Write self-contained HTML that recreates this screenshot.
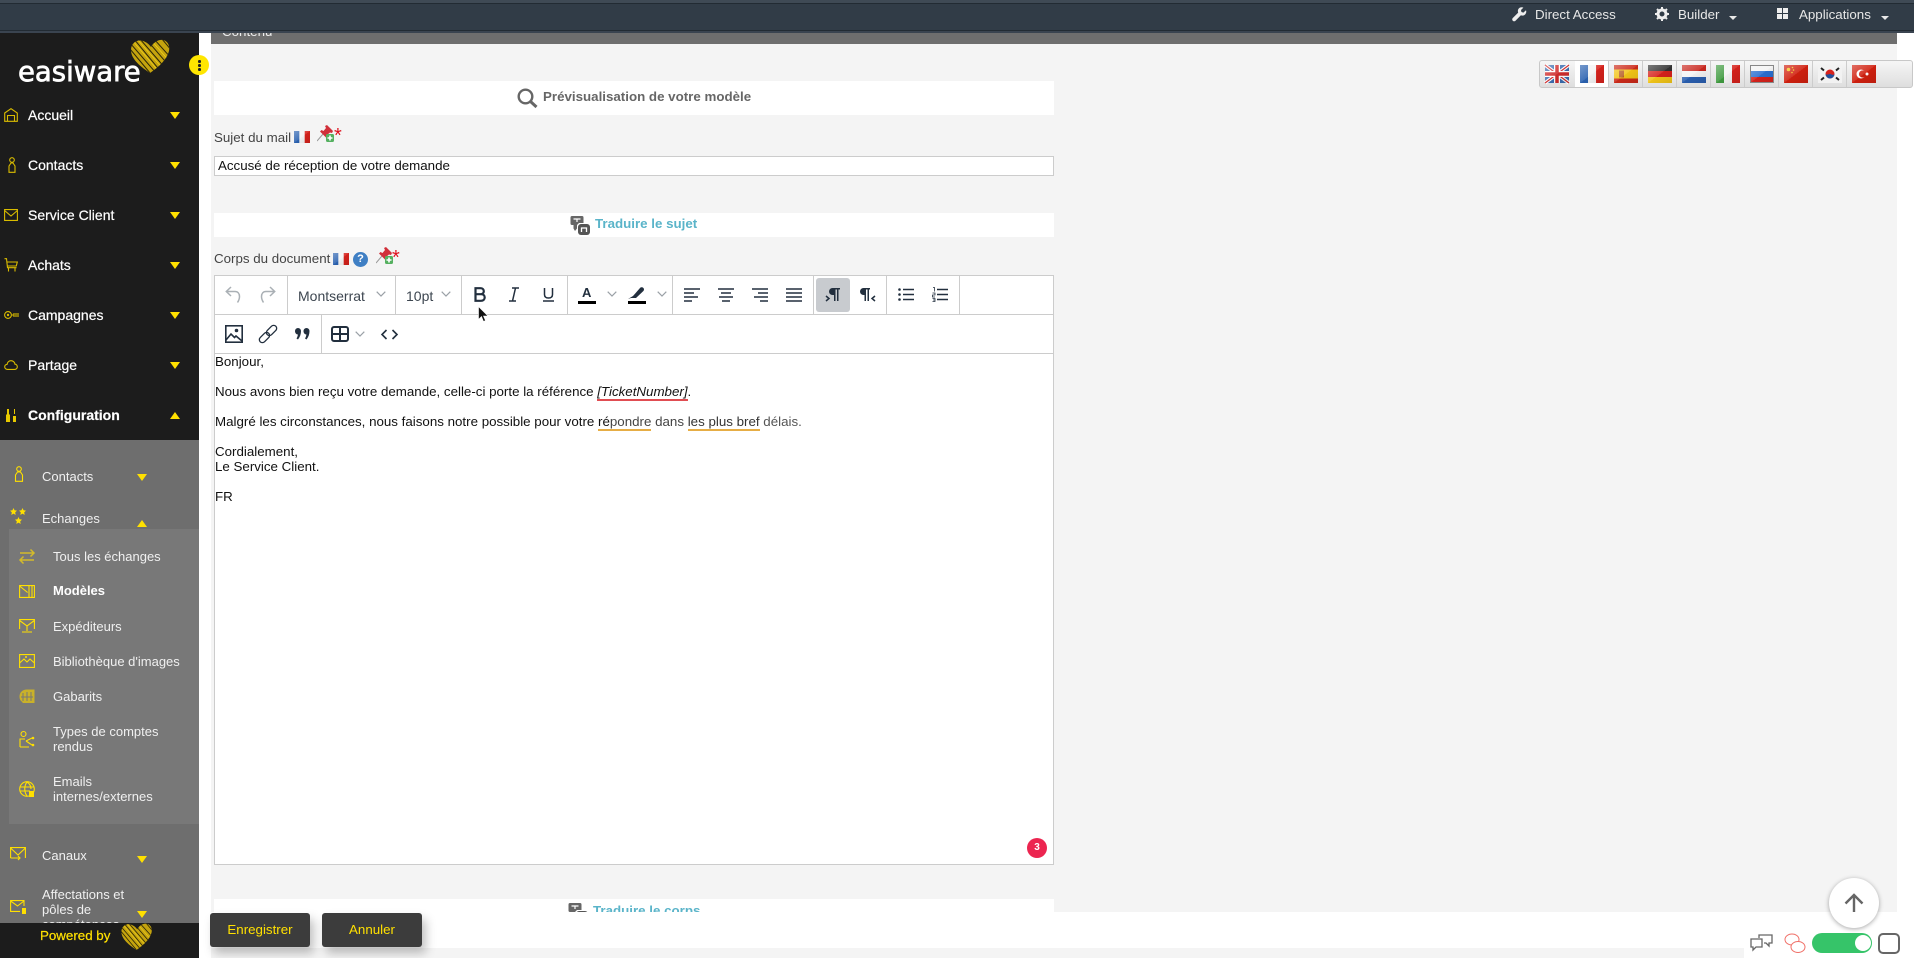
<!DOCTYPE html>
<html lang="fr"><head><meta charset="utf-8"><title>Easiware</title>
<style>
*{box-sizing:border-box}
html,body{margin:0;padding:0;width:1914px;height:958px;overflow:hidden;background:#fff;font-family:"Liberation Sans",sans-serif}
.a{position:absolute}
.t{position:absolute;white-space:nowrap;line-height:20px;font-size:13.33px}
.nav{color:#fff;font-size:14px;left:28px;-webkit-text-stroke:.2px #fff}
.sub{color:#f0f0f0;font-size:13px;left:42px}
.sub2{color:#f0f0f0;font-size:13px;left:53px}
.lab{color:#444;font-size:13.33px;left:214px}
.body{color:#111;font-size:13.33px;left:215px;line-height:15px;height:15px}
.dn{position:absolute;width:0;height:0;border-left:5px solid transparent;border-right:5px solid transparent;border-top:7px solid #ffe000}
.up{position:absolute;width:0;height:0;border-left:5px solid transparent;border-right:5px solid transparent;border-bottom:7px solid #ffe000}
.vl{position:absolute;width:1px;background:#ccc}
svg{position:absolute;overflow:visible}
.ic{fill:none;stroke:#d9bc00;stroke-width:1.1}
.tb{fill:none;stroke:#222f3e;stroke-width:1.6}
.g{fill:none;stroke:#aab0b5;stroke-width:1.5}
.fl{position:absolute;top:65px;width:24px;height:18px}
.car{position:absolute;width:0;height:0;border-left:4px solid transparent;border-right:4px solid transparent;border-top:4px solid #e8e8e8}
.btn{position:absolute;top:913px;width:100px;height:34px;background:#3c3c3c;border-radius:3px;color:#ffe000;font-size:13.33px;line-height:33px;text-align:center;box-shadow:4px 6px 10px rgba(0,0,0,.25)}
</style></head><body>
<svg width="0" height="0" style="position:absolute"><defs>
<linearGradient id="sh" x1="0" y1="0" x2="1" y2="1"><stop offset="0" stop-color="#fff" stop-opacity=".35"/><stop offset=".5" stop-color="#fff" stop-opacity=".1"/><stop offset=".5" stop-color="#000" stop-opacity=".02"/><stop offset="1" stop-color="#000" stop-opacity=".1"/></linearGradient>
<clipPath id="hc"><path d="M20 34C8 26 1 19 1 11 1 4 7 0 13 2c3 1 6 3 8 6 2-4 7-8 12-7 5 1 7 6 6 11-2 8-9 15-19 22z"/></clipPath>
<symbol id="heart" viewBox="0 0 40 34"><g clip-path="url(#hc)"><rect width="40" height="34" fill="#c4a30e"/><g stroke="#2a2508" stroke-width="1"><path d="M0 4 26 34M0 10 20 34M4 0 32 34M10 0 36 30M16 0 40 28M24 0 42 20M32 0 42 12"/></g><g stroke="#f0d020" stroke-width=".7"><path d="M2 1 30 34M7 0 35 32M20 0 41 24"/></g></g></symbol>
<symbol id="ffr" viewBox="0 0 16 12"><rect width="5.4" height="12" fill="#2b62b0"/><rect x="5.4" width="5.3" height="12" fill="#f4f4f4"/><rect x="10.7" width="5.3" height="12" fill="#d6221c"/><rect width="16" height="12" fill="url(#sh)"/></symbol>
<symbol id="pin" viewBox="0 0 17 17"><path d="M0 16 6 9" stroke="#999" stroke-width="1"/><path d="M8 1 10 0 16 6 15 8 13 7.500 10 10 11 12 9.500 13 3 6.500 4.500 5 6.500 6 9 3z" fill="#d1303a"/><rect x="9" y="9" width="8" height="8" rx="1.500" fill="#55b060"/><path d="M13 10.500v5M10.500 13h5" stroke="#fff" stroke-width="1.600"/></symbol>
<symbol id="chev" viewBox="0 0 10 6"><path d="M.7.7 5 5 9.3.7" fill="none" stroke="#9aa0a6" stroke-width="1.2"/></symbol>
<symbol id="trad" viewBox="0 0 20 20"><path d="M2 1h10a1.500 1.500 0 0 1 1.500 1.500V8H9l-2 2v3.500L5 16l-1.500-2.500V10H2A1.500 1.500 0 0 1 .5 8.500v-6A1.500 1.500 0 0 1 2 1z" fill="#666"/><path d="M3.500 4h7M7 4v3" stroke="#fff" stroke-width="1.200"/><rect x="8" y="9" width="12" height="11" rx="3" fill="#555"/><path d="M11.500 17v-4h5v4" fill="none" stroke="#fff" stroke-width="1.300"/></symbol>
<symbol id="star" viewBox="0 0 10 10"><path d="M5 0l1.500 3.300L10 3.800 7.400 6.200 8.100 10 5 8.100 1.900 10l.7-3.800L0 3.800l3.500-.5z" fill="#ffe000"/></symbol>
</defs></svg>

<!-- main background -->
<div class="a" style="left:199px;top:33px;width:1715px;height:925px;background:#fff"></div>
<div class="a" style="left:211px;top:33px;width:1686px;height:925px;background:#f4f4f4"></div>
<div class="a" style="left:211px;top:33px;width:1686px;height:11px;background:#6e6e6e;overflow:hidden"><div class="t" style="left:11px;top:-11px;color:#eee">Contenu</div></div>

<!-- header -->
<div class="a" style="left:0;top:0;width:1914px;height:33px;background:#313c47;border-top:3px solid #3f4a55;box-shadow:inset 0 1px 0 #222b33,inset 0 -2px 0 #3a4450,inset 0 -3px 0 #222b33"></div>
<svg style="left:1512px;top:7px" width="15" height="15" viewBox="0 0 15 15"><path d="M14 3.2 11.4 5.6 9.4 5 9 3 11.4.6C9.4-.2 7 .6 6.2 2.4c-.5 1-.4 2.3 0 3.2L.8 11c-.8.8-.8 1.900 0 2.700s1.900.8 2.700 0l5.400-5.400c1.200.5 2.600.4 3.600-.3 1.500-1 2.200-3 1.500-4.800z" fill="#eee"/></svg>
<div class="t" style="left:1535px;top:5px;color:#e8e8e8">Direct Access</div>
<svg style="left:1655px;top:7px" width="14" height="14" viewBox="0 0 14 14"><circle cx="7" cy="7" r="4" fill="none" stroke="#eee" stroke-width="3"/><path d="M7 0v3M7 11v3M0 7h3M11 7h3M2 2l2 2M10 10l2 2M2 12l2-2M10 4l2-2" stroke="#eee" stroke-width="2"/></svg>
<div class="t" style="left:1678px;top:5px;color:#e8e8e8">Builder</div><div class="car" style="left:1729px;top:16px"></div>
<div class="a" style="left:1777px;top:8px;width:5px;height:5px;background:#eee"></div><div class="a" style="left:1783px;top:8px;width:5px;height:5px;background:#eee"></div><div class="a" style="left:1777px;top:14px;width:5px;height:5px;background:#eee"></div><div class="a" style="left:1783px;top:14px;width:5px;height:5px;background:#eee"></div>
<div class="t" style="left:1799px;top:5px;color:#e8e8e8">Applications</div><div class="car" style="left:1881px;top:16px"></div>

<!-- sidebar -->
<div class="a" style="left:0;top:33px;width:199px;height:925px;background:#1c1c1c"></div>
<div class="t" style="left:18px;top:54px;line-height:36px;font-size:27.5px;font-family:'DejaVu Sans',sans-serif;color:#fff;-webkit-text-stroke:.7px #fff">easiware</div>
<svg style="left:130px;top:39px" width="40" height="34"><use href="#heart" width="40" height="34"/></svg>
<div class="a" style="left:189px;top:55px;width:20px;height:20px;border-radius:50%;background:#ffe600"></div>
<div class="a" style="left:198px;top:60px;width:2.500px;height:2.500px;background:#222;border-radius:50%;box-shadow:0 4px 0 #222,0 8px 0 #222"></div>

<svg style="left:4px;top:108px" width="14" height="14" viewBox="0 0 14 14"><path class="ic" d="M.7 5 7 .7 13.300 5v8.300H.7zM3.500 13.300V7.500h7v5.800"/></svg>
<div class="t nav" style="top:105px">Accueil</div><div class="dn" style="left:170px;top:112px"></div>
<svg style="left:7px;top:157px" width="10" height="16" viewBox="0 0 10 16"><circle class="ic" cx="5" cy="3" r="2.300"/><path class="ic" d="M2 15.300V9l2-3h2l2 3v6.300z"/></svg>
<div class="t nav" style="top:155px">Contacts</div><div class="dn" style="left:170px;top:162px"></div>
<svg style="left:4px;top:209px" width="14" height="12" viewBox="0 0 14 12"><path class="ic" d="M.6.6h12.800v10.800H.6zM.6 1.500 7 7l6.400-5.500"/></svg>
<div class="t nav" style="top:205px">Service Client</div><div class="dn" style="left:170px;top:212px"></div>
<svg style="left:4px;top:258px" width="14" height="14" viewBox="0 0 14 14"><path class="ic" d="M.5.7h2l1 9h9M3.300 4h10l-1 4H3.700M4.500 10v3.500M11 10v3.500"/></svg>
<div class="t nav" style="top:255px">Achats</div><div class="dn" style="left:170px;top:262px"></div>
<svg style="left:4px;top:310px" width="14" height="10" viewBox="0 0 14 10"><circle class="ic" cx="4" cy="5" r="3.400"/><circle cx="4" cy="5" r="1.200" fill="#d9bc00"/><path class="ic" d="M8 5h2M10 3v4M12 3v4M14 3v4"/></svg>
<div class="t nav" style="top:305px">Campagnes</div><div class="dn" style="left:170px;top:312px"></div>
<svg style="left:4px;top:360px" width="14" height="10" viewBox="0 0 14 10"><path class="ic" d="M3.500 9.400C1.800 9.400.7 8.200.7 6.800s1.100-2.400 2.300-2.400C3.300 2.200 5 .7 7 .7s3.800 1.500 4 3.500c1.300.1 2.300 1.200 2.300 2.600s-1 2.600-2.600 2.600z"/></svg>
<div class="t nav" style="top:355px">Partage</div><div class="dn" style="left:170px;top:362px"></div>
<svg style="left:5px;top:408px" width="12" height="14" viewBox="0 0 12 14"><path d="M1 14V7l1-1V1h2v5l1 1v7zM8 14V8h3v6zM9 6V1h1v5z" fill="#e6c800"/></svg>
<div class="t nav" style="top:405px;font-weight:bold">Configuration</div><div class="up" style="left:170px;top:412px"></div>

<div class="a" style="left:0;top:440px;width:199px;height:483px;background:#6e6e6e"></div>
<svg style="left:14px;top:466px" width="10" height="16" viewBox="0 0 10 16"><circle class="ic" style="stroke:#ffe000" cx="5" cy="3" r="2.300"/><path class="ic" style="stroke:#ffe000" d="M1.500 15.300V9l2-3h3l2 3v6.300z"/></svg>
<div class="t sub" style="top:467px">Contacts</div><div class="dn" style="left:137px;top:474px"></div>
<svg style="left:10px;top:508px" width="7" height="7"><use href="#star" width="7" height="7"/></svg>
<svg style="left:19px;top:508px" width="7" height="7"><use href="#star" width="7" height="7"/></svg>
<svg style="left:15px;top:517px" width="7" height="7"><use href="#star" width="7" height="7"/></svg>
<div class="t sub" style="top:509px">Echanges</div><div class="up" style="left:137px;top:520px"></div>

<div class="a" style="left:9px;top:529px;width:190px;height:295px;background:#787878"></div>
<svg style="left:19px;top:549px" width="16" height="15" viewBox="0 0 16 15"><path class="ic" style="stroke:#d4bb2a;stroke-width:1.500" d="M1 4h14M11.500 .5 15 4l-3.500 3.500M15 11H1M4.500 7.500 1 11l3.500 3.500"/></svg>
<div class="t sub2" style="top:547px">Tous les échanges</div>
<svg style="left:19px;top:585px" width="16" height="13" viewBox="0 0 16 13"><path class="ic" style="stroke:#ffe000" d="M.6.600h14.800v11.800H.6zM.6 1l8 6.500M10 1v11M13 1v11"/></svg>
<div class="t sub2" style="top:581px;font-weight:bold;color:#fff">Modèles</div>
<svg style="left:19px;top:619px" width="16" height="14" viewBox="0 0 16 14"><path class="ic" style="stroke:#ffe000" d="M.6 10V.6h14.800V10M.6 1.500 8 7l7.400-5.500M8 7v5M3 13h10"/></svg>
<div class="t sub2" style="top:617px">Expéditeurs</div>
<svg style="left:19px;top:654px" width="16" height="14" viewBox="0 0 16 14"><path class="ic" style="stroke:#ffe000" d="M.6.600h14.800v12.800H.6zM.6 9 5 5l3 3 3-3 4.400 4"/><circle cx="7" cy="3" r="1" fill="#ffe000"/></svg>
<div class="t sub2" style="top:652px">Bibliothèque d'images</div>
<svg style="left:19px;top:689px" width="16" height="15" viewBox="0 0 16 15"><path d="M8 .5C3.500.5.500 3.500.5 7.500c0 2.500 1 4.500 3 5.500V14h12V.5z" fill="#c9b12a"/><path d="M4 4v8M8 3v9M12 3v9M2 8h12" stroke="#787878" stroke-width="1"/></svg>
<div class="t sub2" style="top:687px">Gabarits</div>
<svg style="left:19px;top:731px" width="16" height="17" viewBox="0 0 16 17"><circle class="ic" style="stroke:#ffe000" cx="4.500" cy="3" r="2.500"/><path class="ic" style="stroke:#ffe000" d="M1 16V8h5M1 16h9M7 10l6-3M7 10l6 4"/><circle cx="14" cy="7" r="1.300" fill="#ffe000"/><circle cx="14" cy="14" r="1.300" fill="#ffe000"/></svg>
<div class="t sub2" style="top:722px">Types de comptes</div><div class="t sub2" style="top:737px">rendus</div>
<svg style="left:19px;top:781px" width="16" height="16" viewBox="0 0 16 16"><circle class="ic" style="stroke:#ffe000" cx="8" cy="8" r="7.300"/><path class="ic" style="stroke:#ffe000" d="M1 6h14M1 10h10M8 1C5 5 5 11 8 15M8 1c3 2 4 5 4 7"/><rect x="10" y="10" width="5" height="6" fill="#ffe000"/></svg>
<div class="t sub2" style="top:772px">Emails</div><div class="t sub2" style="top:787px">internes/externes</div>

<svg style="left:10px;top:847px" width="16" height="14" viewBox="0 0 16 14"><path class="ic" style="stroke:#ffe000" d="M.6 11V.6h14.800V11M.6 1 8 8l7.400-7M.6 11h9M8 9l2 2-2 2"/></svg>
<div class="t sub" style="top:846px">Canaux</div><div class="dn" style="left:137px;top:856px"></div>
<div class="a" style="left:0;top:880px;width:199px;height:43px;overflow:hidden">
<div class="t sub" style="top:5px">Affectations et</div><div class="t sub" style="top:20px">pôles de</div><div class="t sub" style="top:35px">compétences</div></div>
<svg style="left:10px;top:900px" width="16" height="14" viewBox="0 0 16 14"><path class="ic" style="stroke:#ffe000" d="M14 6V.6H.6v10.800H10M.6 1 7.500 6 14 1"/><rect x="12" y="8" width="4" height="6" fill="#ffe000"/></svg>
<div class="dn" style="left:137px;top:911px"></div>

<div class="a" style="left:0;top:923px;width:199px;height:35px;background:#1c1c1c"></div>
<div class="t" style="left:40px;top:926px;font-size:13.33px;color:#ffe000;-webkit-text-stroke:.2px #ffe000">Powered by</div>
<svg style="left:120px;top:923px" width="33" height="27" viewBox="0 0 40 34"><use href="#heart" width="40" height="34"/></svg>

<!-- preview -->
<div class="a" style="left:214px;top:81px;width:840px;height:34px;background:#fff"></div>
<svg style="left:517px;top:88px" width="21" height="20" viewBox="0 0 21 20"><circle cx="8.500" cy="8.500" r="6.800" fill="none" stroke="#666" stroke-width="2.400"/><path d="M13.500 13.500 19.500 19" stroke="#666" stroke-width="3"/></svg>
<div class="t" style="left:543px;top:87px;font-weight:bold;color:#666">Prévisualisation de votre modèle</div>

<div class="t lab" style="top:128px">Sujet du mail</div>
<svg style="left:294px;top:131px" width="16" height="12"><use href="#ffr" width="16" height="12"/></svg>
<svg style="left:317px;top:125px" width="17" height="17"><use href="#pin" width="17" height="17"/></svg>
<div class="t" style="left:334px;top:126px;color:#e0101c;font-size:20px">*</div>

<div class="a" style="left:214px;top:156px;width:840px;height:20px;background:#fff;border:1px solid #ccc"></div>
<div class="t" style="left:218px;top:156px;color:#111">Accusé de réception de votre demande</div>

<div class="a" style="left:214px;top:213px;width:840px;height:24px;background:#fff"></div>
<svg style="left:570px;top:215px" width="20" height="20"><use href="#trad" width="20" height="20"/></svg>
<div class="t" style="left:595px;top:214px;font-weight:bold;color:#5ab4c9">Traduire le sujet</div>

<div class="t lab" style="top:249px">Corps du document</div>
<svg style="left:333px;top:253px" width="16" height="12"><use href="#ffr" width="16" height="12"/></svg>
<div class="a" style="left:353px;top:252px;width:15px;height:15px;border-radius:50%;background:#3f7fc4;color:#fff;font-size:11px;font-weight:bold;line-height:15px;text-align:center">?</div>
<svg style="left:376px;top:247px" width="17" height="17"><use href="#pin" width="17" height="17"/></svg>
<div class="t" style="left:392px;top:248px;color:#e0101c;font-size:20px">*</div>

<!-- editor -->
<div class="a" style="left:214px;top:275px;width:840px;height:590px;background:#fff;border:1px solid #ccc"></div>
<div class="a" style="left:215px;top:314px;width:838px;height:1px;background:#ccc"></div>
<div class="a" style="left:215px;top:353px;width:838px;height:1px;background:#ccc"></div>
<div class="vl" style="left:287px;top:276px;height:38px"></div>
<div class="vl" style="left:395px;top:276px;height:38px"></div>
<div class="vl" style="left:461px;top:276px;height:38px"></div>
<div class="vl" style="left:567px;top:276px;height:38px"></div>
<div class="vl" style="left:672px;top:276px;height:38px"></div>
<div class="vl" style="left:813px;top:276px;height:38px"></div>
<div class="vl" style="left:886px;top:276px;height:38px"></div>
<div class="vl" style="left:959px;top:276px;height:38px"></div>
<div class="vl" style="left:321px;top:315px;height:38px"></div>

<svg style="left:225px;top:286px" width="16" height="18" viewBox="0 0 16 18"><path class="g" d="M6 1 1.300 5.500 6 10M1.500 5.500H10c3 0 4.500 2.200 4.500 5s-1 4.500-2 6"/></svg>
<svg style="left:260px;top:286px" width="16" height="18" viewBox="0 0 16 18"><path class="g" d="M10 1l4.700 4.500L10 10M14.500 5.500H6c-3 0-4.500 2.200-4.500 5s1 4.500 2 6"/></svg>
<div class="t" style="left:298px;top:286px;font-size:14px;color:#3d4650">Montserrat</div>
<svg style="left:376px;top:291px" width="10" height="6"><use href="#chev" width="10" height="6"/></svg>
<div class="t" style="left:406px;top:286px;font-size:14px;color:#3d4650">10pt</div>
<svg style="left:441px;top:291px" width="10" height="6"><use href="#chev" width="10" height="6"/></svg>
<svg style="left:474px;top:287px" width="12" height="15" viewBox="0 0 12 15"><path d="M1.500 1.200h5c2 0 3.300 1.200 3.300 3S8.500 7.200 6.500 7.200h-5zM1.500 7.200h5.500c2.300 0 3.700 1.300 3.700 3.200s-1.400 3.400-3.700 3.400H1.500z" fill="none" stroke="#222f3e" stroke-width="2.200"/></svg>
<svg style="left:509px;top:287px" width="10" height="15" viewBox="0 0 10 15"><path d="M3 1h7M0 14h7M6.500 1l-3 13" fill="none" stroke="#222f3e" stroke-width="1.500"/></svg>
<svg style="left:543px;top:287px" width="11" height="15" viewBox="0 0 11 15"><path d="M1.500 1v6.500c0 2.400 1.700 3.500 4 3.500s4-1.100 4-3.500V1M0 14h11" fill="none" stroke="#222f3e" stroke-width="1.500"/></svg>
<div class="t" style="left:582px;top:283px;font-size:13px;font-weight:bold;color:#222f3e">A</div>
<div class="a" style="left:578px;top:301px;width:18px;height:3px;background:#000"></div>
<svg style="left:607px;top:291px" width="10" height="6"><use href="#chev" width="10" height="6"/></svg>
<svg style="left:628px;top:287px" width="17" height="13" viewBox="0 0 17 13"><path d="M0 12 5 9 12 1c1.500-1.500 4-.5 4 1.500 0 .5-.2 1-.6 1.500L8 11H3z" fill="#222f3e"/></svg>
<div class="a" style="left:628px;top:301px;width:18px;height:3px;background:#000"></div>
<svg style="left:657px;top:291px" width="10" height="6"><use href="#chev" width="10" height="6"/></svg>
<!-- align -->
<svg style="left:684px;top:287px" width="16" height="15"><path class="tb" d="M0 2h16M0 6h10M0 10h14M0 14h8"/></svg>
<svg style="left:718px;top:287px" width="16" height="15"><path class="tb" d="M0 2h16M3 6h10M1 10h14M4 14h8"/></svg>
<svg style="left:752px;top:287px" width="16" height="15"><path class="tb" d="M0 2h16M6 6h10M2 10h14M8 14h8"/></svg>
<svg style="left:786px;top:287px" width="16" height="15"><path class="tb" d="M0 2h16M0 6h16M0 10h16M0 14h16"/></svg>
<div class="a" style="left:816px;top:278px;width:34px;height:34px;background:#c8cbcf;border-radius:3px"></div>
<svg style="left:825px;top:287px" width="16" height="15" viewBox="0 0 16 15"><path d="M10 1H7.500a3.500 3.500 0 0 0 0 7H9v6h1.500V2.500H12V14h1.500V2.500H15V1z" fill="#222f3e"/><path d="M1 9l3 2.500L1 14" fill="none" stroke="#222f3e" stroke-width="1.500"/></svg>
<svg style="left:859px;top:287px" width="17" height="15" viewBox="0 0 17 15"><path d="M8 1H4.500a3.500 3.500 0 0 0 0 7H5.500v6H7V2.500h1.500V14H10V2.500h1V1z" fill="#222f3e"/><path d="M16 9l-3 2.500L16 14" fill="none" stroke="#222f3e" stroke-width="1.500"/></svg>
<svg style="left:898px;top:287px" width="16" height="15"><path class="tb" d="M5 2.500h11M5 7.500h11M5 12.500h11"/><circle cx="1.500" cy="2.500" r="1.300" fill="#222f3e"/><circle cx="1.500" cy="7.500" r="1.300" fill="#222f3e"/><circle cx="1.500" cy="12.500" r="1.300" fill="#222f3e"/></svg>
<svg style="left:932px;top:287px" width="16" height="15"><path class="tb" d="M5 2.500h11M5 7.500h11M5 12.500h11"/><path d="M1 .5h1.500v4M.5 6h2.500v2H.5v2H3M.5 11.500H3v3H.5M1 13h2" fill="none" stroke="#222f3e" stroke-width=".8"/></svg>

<svg style="left:225px;top:325px" width="18" height="18" viewBox="0 0 18 18"><rect x=".8" y=".8" width="16.400" height="16.400" fill="none" stroke="#222f3e" stroke-width="1.600"/><circle cx="11.500" cy="5.500" r="1.800" fill="#222f3e"/><path d="M1 15 6 9l3.500 3.500L11 11l6 5" fill="none" stroke="#222f3e" stroke-width="1.600"/></svg>
<svg style="left:259px;top:325px" width="18" height="18" viewBox="0 0 18 18"><g transform="rotate(-45 9 9)" fill="none" stroke="#222f3e" stroke-width="1.300"><rect x="-2" y="6" width="12" height="6" rx="3"/><rect x="8" y="6" width="12" height="6" rx="3"/></g></svg>
<svg style="left:295px;top:328px" width="15" height="12" viewBox="0 0 15 12"><path d="M0 3a3 3 0 0 1 6 0c0 3-1 6-3 8.500L1.500 10.500C2.200 9.500 2.700 8 2.900 6.500 1.200 6.400 0 5 0 3zM8.500 3a3 3 0 0 1 6 0c0 3-1 6-3 8.500L10 10.500c.7-1 1.200-2.500 1.400-4C9.700 6.400 8.500 5 8.500 3z" fill="#222f3e"/></svg>
<svg style="left:331px;top:326px" width="18" height="16" viewBox="0 0 18 16"><rect x="1" y="1" width="16" height="14" rx="2" fill="none" stroke="#222f3e" stroke-width="2"/><path d="M1 8h16M9 1v14" stroke="#222f3e" stroke-width="2"/></svg>
<svg style="left:355px;top:331px" width="10" height="6"><use href="#chev" width="10" height="6"/></svg>
<svg style="left:381px;top:329px" width="17" height="11" viewBox="0 0 17 11"><path class="tb" d="M5.500 1 1 5.500 5.500 10M11.500 1 16 5.500 11.500 10"/></svg>

<!-- cursor -->
<svg style="left:478px;top:306px" width="11" height="16" viewBox="0 0 11 16"><path d="M.5.500v13l3-3 2 5 2-1-2-4.500h4.500z" fill="#111" stroke="#fff" stroke-width=".6"/></svg>

<!-- body -->
<div class="t body" style="top:354px">Bonjour,</div>
<div class="t body" style="top:384px">Nous avons bien reçu votre demande, celle-ci porte la référence <i style="border-bottom:2px solid #e04d52;padding-bottom:0">[TicketNumber]</i>.</div>
<div class="t body" style="top:414px">Malgré les circonstances, nous faisons notre possible pour votre <span style="border-bottom:2px solid #e6ad45">ré<span style="color:#444">pondre</span></span> <span style="color:#444">dans</span> <span style="border-bottom:2px solid #e6ad45;color:#333">les plus bref</span> <span style="color:#555">délais.</span></div>
<div class="t body" style="top:444px">Cordialement,</div>
<div class="t body" style="top:459px">Le Service Client.</div>
<div class="t body" style="top:489px">FR</div>

<div class="a" style="left:1027px;top:838px;width:20px;height:20px;border-radius:50%;background:#ec2550;color:#fff;font-size:10px;font-weight:bold;line-height:20px;text-align:center">3</div>

<!-- bottom translate -->
<div class="a" style="left:214px;top:899px;width:840px;height:13px;background:#fff;overflow:hidden">
<svg style="left:354px;top:3px" width="20" height="20"><use href="#trad" width="20" height="20"/></svg>
<div class="t" style="left:379px;top:2px;font-weight:bold;color:#5ab4c9">Traduire le corps</div></div>

<!-- bottom bar -->
<div class="a" style="left:199px;top:912px;width:1715px;height:36px;background:#fff"></div>
<div class="a" style="left:1897px;top:33px;width:17px;height:925px;background:#fff"></div>
<div class="btn" style="left:210px">Enregistrer</div>
<div class="btn" style="left:322px">Annuler</div>

<!-- flags -->
<div class="a" style="left:1539px;top:60px;width:374px;height:28px;background:linear-gradient(#f6f6f6,#dedede);border:1px solid #c8c8c8;border-radius:3px"></div>
<div class="a" style="left:1575px;top:61px;width:33px;height:26px;background:#fff"></div>
<div class="a" style="left:1608px;top:61px;width:1px;height:26px;background:#ccc"></div><div class="a" style="left:1642px;top:61px;width:1px;height:26px;background:#ccc"></div><div class="a" style="left:1676px;top:61px;width:1px;height:26px;background:#ccc"></div><div class="a" style="left:1710px;top:61px;width:1px;height:26px;background:#ccc"></div><div class="a" style="left:1744px;top:61px;width:1px;height:26px;background:#ccc"></div><div class="a" style="left:1778px;top:61px;width:1px;height:26px;background:#ccc"></div><div class="a" style="left:1812px;top:61px;width:1px;height:26px;background:#ccc"></div><div class="a" style="left:1846px;top:61px;width:1px;height:26px;background:#ccc"></div>
<svg class="fl" style="left:1545px" viewBox="0 0 24 18"><rect width="24" height="18" fill="#3c6db0"/><path d="M0 0 24 18M24 0 0 18" stroke="#fff" stroke-width="3.500"/><path d="M0 0 24 18M24 0 0 18" stroke="#cf2b2b" stroke-width="1.200"/><path d="M12 0v18M0 9h24" stroke="#fff" stroke-width="6"/><path d="M12 0v18M0 9h24" stroke="#cf2b2b" stroke-width="3.500"/><rect width="24" height="18" fill="url(#sh)"/></svg>
<svg class="fl" style="left:1580px" viewBox="0 0 24 18"><use href="#ffr" width="24" height="18"/></svg>
<svg class="fl" style="left:1614px" viewBox="0 0 24 18"><rect width="24" height="18" fill="#cc2a1a"/><rect y="4.500" width="24" height="9" fill="#f2c518"/><rect x="5" y="5.500" width="5" height="7" fill="#b8622a"/><rect width="24" height="18" fill="url(#sh)"/></svg>
<svg class="fl" style="left:1648px" viewBox="0 0 24 18"><rect width="24" height="6" fill="#333"/><rect y="6" width="24" height="6" fill="#d6221c"/><rect y="12" width="24" height="6" fill="#f2c518"/><rect width="24" height="18" fill="url(#sh)"/></svg>
<svg class="fl" style="left:1682px" viewBox="0 0 24 18"><rect width="24" height="6" fill="#c9281f"/><rect y="6" width="24" height="6" fill="#f4f4f4"/><rect y="12" width="24" height="6" fill="#2a5fb0"/><rect width="24" height="18" fill="url(#sh)"/></svg>
<svg class="fl" style="left:1716px" viewBox="0 0 24 18"><rect width="8" height="18" fill="#3f9a3f"/><rect x="8" width="8" height="18" fill="#f4f4f4"/><rect x="16" width="8" height="18" fill="#d6221c"/><rect width="24" height="18" fill="url(#sh)"/></svg>
<svg class="fl" style="left:1750px" viewBox="0 0 24 18"><rect width="24" height="6" fill="#f4f4f4"/><rect y="6" width="24" height="6" fill="#2a6fd0"/><rect y="12" width="24" height="6" fill="#d6221c"/><rect width="24" height="18" fill="url(#sh)"/><rect x=".5" y=".5" width="23" height="17" fill="none" stroke="#888"/></svg>
<svg class="fl" style="left:1784px" viewBox="0 0 24 18"><rect width="24" height="18" fill="#d0200f"/><circle cx="4.500" cy="4.500" r="1.800" fill="#f4c518"/><circle cx="8.500" cy="2.500" r=".8" fill="#f4c518"/><circle cx="9.500" cy="5" r=".8" fill="#f4c518"/><circle cx="8" cy="7.500" r=".8" fill="#f4c518"/><rect width="24" height="18" fill="url(#sh)"/></svg>
<svg class="fl" style="left:1818px" viewBox="0 0 24 18"><rect width="24" height="18" fill="#f2f2f2"/><circle cx="12" cy="9" r="4.500" fill="#d6221c"/><path d="M7.500 9a4.500 4.500 0 0 0 9 0c-1.500 2-3 0-4.500 0s-3 1.500-4.500 0z" fill="#1f4f9a"/><path d="M3 3l3 2.500M21 3l-3 2.500M3 15l3-2.500M21 15l-3-2.500" stroke="#222" stroke-width="2"/></svg>
<svg class="fl" style="left:1852px" viewBox="0 0 24 18"><rect width="24" height="18" fill="#d0200f"/><circle cx="9" cy="9" r="4.500" fill="#fff"/><circle cx="10.500" cy="9" r="3.600" fill="#d0200f"/><circle cx="15" cy="9" r="1.500" fill="#fff"/><rect width="24" height="18" fill="url(#sh)"/></svg>

<!-- bottom-right widgets -->
<div class="a" style="left:1744px;top:928px;width:170px;height:30px;background:#fff"></div>
<div class="a" style="left:1829px;top:878px;width:50px;height:50px;border-radius:50%;background:#fff;box-shadow:0 1px 5px rgba(0,0,0,.35)"></div>
<svg style="left:1844px;top:893px" width="20" height="20" viewBox="0 0 20 20"><path d="M10 19V2M1.500 10.500 10 2l8.500 8.500" fill="none" stroke="#666" stroke-width="2.400"/></svg>
<svg style="left:1750px;top:934px" width="23" height="18" viewBox="0 0 23 18"><path d="M9 4V1h13v8h-3v3l-3-3h-2M1 5h11v8H6l-3 3v-3H1z" fill="none" stroke="#666" stroke-width="1.300"/></svg>
<svg style="left:1784px;top:933px" width="22" height="21" viewBox="0 0 22 21"><ellipse cx="8" cy="6.500" rx="7" ry="5.500" fill="none" stroke="#f07068" stroke-width="1"/><ellipse cx="14" cy="14" rx="7" ry="5.500" fill="#fff" stroke="#f07068" stroke-width="1"/></svg>
<div class="a" style="left:1812px;top:933px;width:60px;height:20px;border-radius:10px;background:#36c469"></div>
<div class="a" style="left:1855px;top:935px;width:16px;height:16px;border-radius:50%;background:#fff"></div>
<div class="a" style="left:1878px;top:933px;width:22px;height:21px;border:2px solid #666;border-radius:5px;background:#fff"></div>
</body></html>
